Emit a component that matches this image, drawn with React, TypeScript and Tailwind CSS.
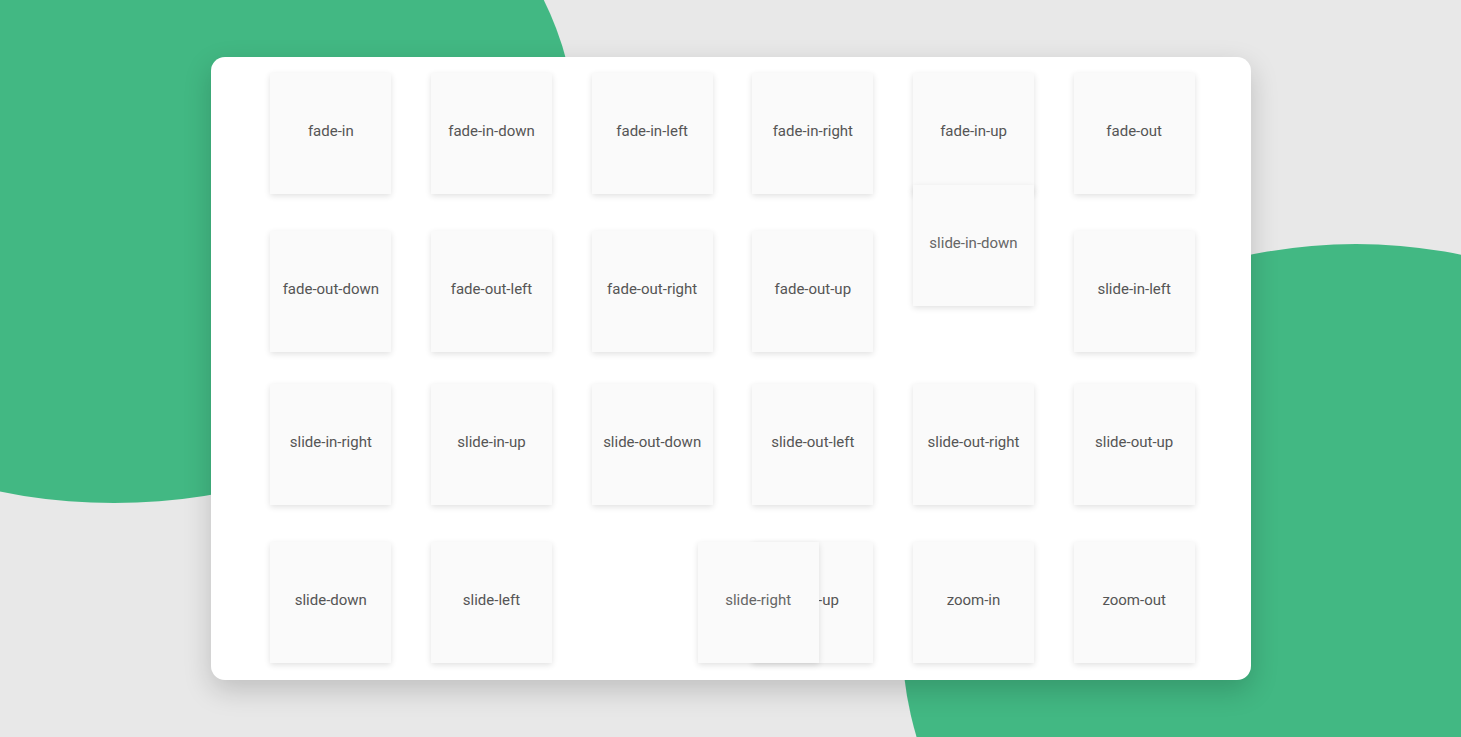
import React from 'react';

interface Item {
  name: string;
  // mid-animation boxes sit off their grid cell
  shift?: string;
}

const rows: { items: Item[]; gap: string }[] = [
  {
    gap: 'mt-0',
    items: [
      { name: 'fade-in' },
      { name: 'fade-in-down' },
      { name: 'fade-in-left' },
      { name: 'fade-in-right' },
      { name: 'fade-in-up' },
      { name: 'fade-out' },
    ],
  },
  {
    gap: 'mt-[37px]',
    items: [
      { name: 'fade-out-down' },
      { name: 'fade-out-left' },
      { name: 'fade-out-right' },
      { name: 'fade-out-up' },
      { name: 'slide-in-down', shift: 'translate-y-[-46px] text-[#666]' },
      { name: 'slide-in-left' },
    ],
  },
  {
    gap: 'mt-[32px]',
    items: [
      { name: 'slide-in-right' },
      { name: 'slide-in-up' },
      { name: 'slide-out-down' },
      { name: 'slide-out-left' },
      { name: 'slide-out-right' },
      { name: 'slide-out-up' },
    ],
  },
  {
    gap: 'mt-[37px]',
    items: [
      { name: 'slide-down' },
      { name: 'slide-left' },
      { name: 'slide-right', shift: 'translate-x-[106px] z-10 text-[#666]' },
      { name: 'slide-up' },
      { name: 'zoom-in' },
      { name: 'zoom-out' },
    ],
  },
];

const Box: React.FC<{ item: Item }> = ({ item }) => (
  <div className="flex justify-center">
    <div
      className={`relative w-[121px] h-[121px] bg-[#fafafa] shadow-[0_2px_6px_rgba(0,0,0,0.12)] flex items-center justify-center pb-[4px] text-[15px] text-[#555] ${item.shift ?? ''}`}
    >
      {item.name}
    </div>
  </div>
);

export default function App() {
  return (
    <div
      className="relative h-screen w-full overflow-hidden bg-[#e8e8e8] flex items-center justify-center"
      style={{ fontFamily: 'Roboto, "Noto Sans", Arial, sans-serif' }}
    >
      {/* background blobs */}
      <div className="absolute left-[-348px] top-[-233px] w-[924px] h-[736px] rounded-[50%] bg-[#42b883]"></div>
      <div className="absolute left-[902px] top-[244px] w-[908px] h-[788px] rounded-[50%] bg-[#42b883]"></div>

      <div className="relative w-[1040px] bg-white rounded-[14px] shadow-[0_10px_28px_rgba(0,0,0,0.18)] pt-[16px] pb-[17px] pl-[40px] pr-[36px]">
        {rows.map((row, i) => (
          <div key={i} className={`grid grid-cols-6 ${row.gap}`}>
            {row.items.map((item) => (
              <Box key={item.name} item={item} />
            ))}
          </div>
        ))}
      </div>
    </div>
  );
}
